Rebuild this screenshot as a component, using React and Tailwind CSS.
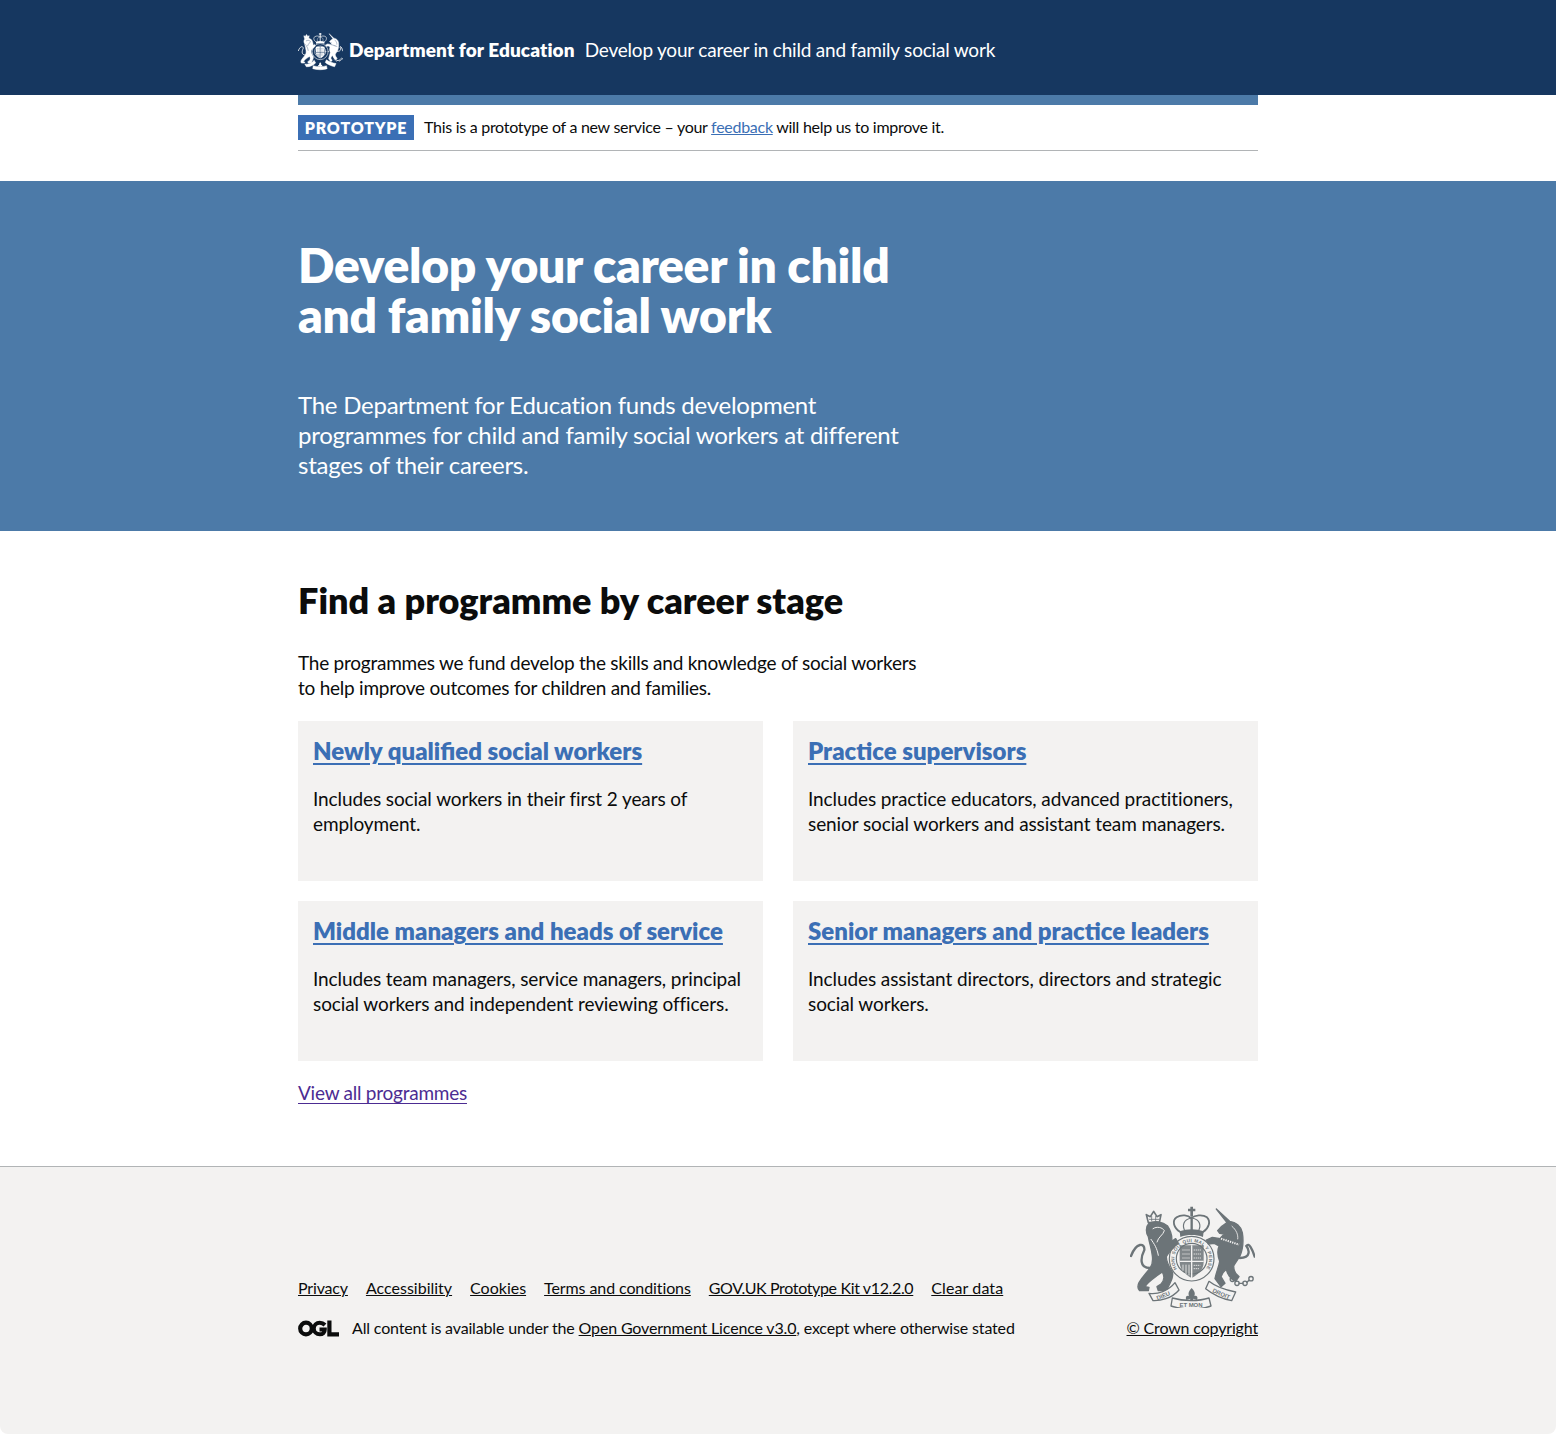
const font = { fontFamily: 'Lato, sans-serif' };

function Crest({ className, color, bg, labels = false }) {
  const ribbonFill = labels ? bg : color;
  return (
    <svg viewBox="15 20 375 306" className={className} aria-hidden="true">
      {/* lion crown */}
      <path d="M70 70 L64 46 L76 52 L86 36 L96 52 L108 46 L103 70 Z" fill={labels ? bg : color} stroke={color} strokeWidth="5" strokeLinejoin="round" />
      <path d="M72 60 H102 M80 50 V66 M92 50 V66" fill="none" stroke={color} strokeWidth="2.5" />
      <g fill={color} stroke={color} strokeWidth="4" strokeLinejoin="round">
        {/* lion */}
        <path d="M72 72 C62 82 62 100 70 112 C74 135 80 150 82 170 C84 185 82 195 76 205 C64 222 52 232 42 250 C38 258 38 268 44 274 L70 274 L72 264 L60 262 C68 248 84 238 100 226 L112 218 C118 230 120 240 108 254 L96 262 L100 274 L126 272 C134 250 148 235 142 218 C134 205 124 190 124 172 C130 160 142 150 150 140 L160 132 L152 118 L140 126 C142 110 136 92 128 80 C112 66 88 64 72 72 Z" />
        {/* unicorn */}
        <path d="M274 29 L314 66 C332 68 348 80 352 100 C356 125 354 150 344 172 C336 184 330 192 326 200 C326 212 330 224 342 232 L332 246 C316 240 306 222 304 210 C298 214 292 222 288 232 L300 252 L288 262 L270 238 C274 218 282 200 284 186 C278 170 276 156 282 140 L268 132 L250 134 L244 122 L262 114 L286 118 C288 112 294 108 298 104 L284 102 L278 94 C286 84 296 76 306 70 Z" />
      </g>
      <g fill={color}>
        {/* royal crown */}
        <path d="M196 22 h8 v6 h7 v8 h-7 v14 h-8 v-14 h-7 v-8 h7 z" />
        <path d="M164 96 C186 88 214 88 236 96 L234 113 C212 105 188 105 166 113 Z" />
        {/* motto flower */}
        <path d="M200 266 C208 274 212 282 208 290 C216 288 220 294 216 302 L204 298 L206 308 H194 L196 298 L184 302 C180 294 184 288 192 290 C188 282 192 274 200 266 Z" />
      </g>
      <g fill="none" stroke={color} strokeLinecap="round">
        <path d="M166 98 C146 86 140 64 155 54 C170 44 190 48 198 56 C210 48 232 44 246 54 C258 66 252 86 234 98" strokeWidth="5.5" />
        <path d="M200 54 V94" strokeWidth="7" />
        <path d="M180 96 C170 76 176 62 198 56 M220 96 C230 76 224 62 202 56" strokeWidth="3.5" />
        {/* tails */}
        <path d="M78 206 C40 208 48 172 58 152 C60 130 34 128 18 170" strokeWidth="7" />
        <path d="M344 176 C380 176 372 150 364 140 C372 128 382 150 389 172" strokeWidth="7" />
        {/* garter */}
        <circle cx="200" cy="178" r="67" strokeWidth={labels ? 3.5 : 5} />
        <circle cx="200" cy="178" r="46" strokeWidth={labels ? 3.5 : 5} />
        {/* chain */}
        <g strokeWidth="4">
          <circle cx="322" cy="240" r="6.5" />
          <circle cx="336" cy="252" r="6.5" />
          <circle cx="360" cy="252" r="6.5" />
          <circle cx="378" cy="238" r="6.5" />
          <path d="M342 252 H354 M366 249 L372 243" />
        </g>
      </g>
      {/* shield */}
      <path d="M164 138 H236 V188 C236 212 218 226 200 236 C182 226 164 212 164 188 Z" fill={color} fillOpacity={labels ? 0.85 : 1} />
      <g fill="none" stroke={bg}>
        <path d="M200 138 V236 M164 186 H236" strokeWidth="4" />
        <path d="M172 152 H194 M172 164 H194 M172 176 H194 M206 152 H228 M206 164 H228 M206 176 H228 M206 198 H226 M206 208 H222" strokeWidth="2.5" strokeDasharray="4 2" />
        <path d="M174 196 V214 M183 196 V224 M192 196 V228" strokeWidth="2.5" />
        {/* lion face and mane */}
        <path d="M84 88 C96 80 112 84 118 94 C114 108 100 112 96 128 M78 120 C88 134 96 146 100 168" strokeWidth="3" strokeLinecap="round" />
        {/* unicorn collar */}
        <path d="M288 118 L342 136" strokeWidth="6" strokeDasharray="4 3" />
        <path d="M320 80 C334 92 340 106 338 120" strokeWidth="2.5" />
      </g>
      {/* ribbons */}
      <g fill={ribbonFill} stroke={color} strokeWidth="4" strokeLinejoin="round">
        <path d="M72 282 C98 286 130 275 150 250 L162 272 C140 298 105 305 84 304 Z" />
        <path d="M252 246 C272 262 300 272 332 278 L320 304 C290 298 262 284 242 268 Z" />
        <path d="M142 296 C175 306 222 306 252 296 L258 320 C225 332 175 332 138 320 Z" />
      </g>
      {labels && (
        <g fill={color} fontWeight="700" style={{ fontFamily: '"Liberation Sans", sans-serif' }} textAnchor="middle">
          <text x="117" y="295" fontSize="18" transform="rotate(-22 117 295)">DIEU</text>
          <text x="286" y="289" fontSize="18" transform="rotate(24 286 289)">DROIT</text>
          <text x="198" y="324" fontSize="18">ET MON</text>
          <path id="garter-arc" d="M160 213 A52 52 0 1 1 240 213" fill="none" />
          <text fontSize="14" letterSpacing="1">
            <textPath href="#garter-arc" startOffset="50%">HONI SOIT QUI MAL Y PENSE</textPath>
          </text>
        </g>
      )}
    </svg>
  );
}

function OglLogo() {
  return (
    <svg viewBox="0 0 41 17" className="w-[41px] h-[17px]" aria-hidden="true">
      <circle cx="8" cy="8.5" r="5.8" fill="none" stroke="#0b0c0c" strokeWidth="4.2" />
      <path d="M27 5 C25.5 3.5 23.8 2.7 21.8 2.7 C18.4 2.7 15.8 5.2 15.8 8.5 C15.8 11.8 18.4 14.3 21.8 14.3 C24.8 14.3 26.8 12.4 26.8 9.4 H21.5" fill="none" stroke="#0b0c0c" strokeWidth="4" />
      <path d="M31.4 0.5 V14.4 H41" fill="none" stroke="#0b0c0c" strokeWidth="4.2" />
    </svg>
  );
}

function Card({ title, children }) {
  return (
    <div className="bg-[#f3f2f1] h-40 p-[15px]">
      <h3 className="text-[24px] leading-[30px] font-extrabold">
        <a href="#" className="text-[#3b6fb5] underline underline-offset-[3px] decoration-2">{title}</a>
      </h3>
      <p className="mt-[20px] text-[19px] leading-[25px] text-[#0b0c0c] tracking-[-0.1px]">{children}</p>
    </div>
  );
}

const footerLinks = [
  { label: "Privacy", cls: "tracking-[-0.16px]" },
  { label: "Accessibility", cls: "tracking-[0px]" },
  { label: "Cookies", cls: "tracking-[0px]" },
  { label: "Terms and conditions", cls: "tracking-[-0.1px]" },
  { label: "GOV.UK Prototype Kit v12.2.0", cls: "tracking-[-0.36px]" },
  { label: "Clear data", cls: "tracking-[0.1px]" },
];

export default function App() {
  return (
    <div className="min-h-[1434px] flex flex-col bg-white text-[#0b0c0c] overflow-hidden" style={font}>
      <header className="bg-[#163760] h-[95px] text-white">
        <div className="w-[960px] mx-auto flex items-center pt-[27px] h-[45px] box-content">
          <Crest className="w-[45px] h-[40px] shrink-0 mt-[2px]" color="#ffffff" bg="#163760" />
          <a href="#" className="ml-[6px] text-[19px] font-extrabold leading-[25px] tracking-[0.1px]">Department for Education</a>
          <span className="ml-[10px] text-[19px] leading-[25px] tracking-[-0.2px]">Develop your career in child and family social work</span>
        </div>
      </header>

      <div className="w-[960px] mx-auto">
        <div className="h-[10px] bg-[#4c7aa8]" />
        <div className="h-[46px] flex items-center border-b border-[#b1b4b6]">
          <strong className="bg-[#3b6fb5] text-white text-[16px] font-extrabold tracking-[0.8px] h-[25px] leading-[25px] w-[116px] text-center shrink-0">PROTOTYPE</strong>
          <span className="ml-[10px] text-[16px] tracking-[-0.28px] relative -top-px">
            This is a prototype of a new service – your <a href="#" className="text-[#3b6fb5] underline">feedback</a> will help us to improve it.
          </span>
        </div>
      </div>

      <section className="mt-[30px] bg-[#4c7aa8] h-[350px] text-white">
        <div className="w-[960px] mx-auto pt-[59px]">
          <h1 className="text-[48px] leading-[50px] font-extrabold w-[630px] tracking-[-0.3px]">Develop your career in child and family social work</h1>
          <p className="mt-[50px] text-[24px] leading-[30px] w-[630px] tracking-[-0.25px]">The Department for Education funds development programmes for child and family social workers at different stages of their careers.</p>
        </div>
      </section>

      <main className="w-[960px] mx-auto pt-[49px] pb-[61px]">
        <h2 className="text-[36px] leading-[40px] font-extrabold">Find a programme by career stage</h2>
        <p className="mt-[30px] text-[19px] leading-[25px] w-[630px] tracking-[-0.24px]">The programmes we fund develop the skills and knowledge of social workers to help improve outcomes for children and families.</p>
        <div className="mt-[21px] grid grid-cols-2 gap-x-[30px] gap-y-5">
          <Card title="Newly qualified social workers">Includes social workers in their first 2 years of employment.</Card>
          <Card title="Practice supervisors">Includes practice educators, advanced practitioners, senior social workers and assistant team managers.</Card>
          <Card title="Middle managers and heads of service">Includes team managers, service managers, principal social workers and independent reviewing officers.</Card>
          <Card title="Senior managers and practice leaders">Includes assistant directors, directors and strategic social workers.</Card>
        </div>
        <p className="mt-[19px] text-[19px] leading-[25px] tracking-[-0.24px]">
          <a href="#" className="text-[#4c2c92] underline underline-offset-[3px]">View all programmes</a>
        </p>
      </main>

      <footer className="flex-1 bg-[#f3f2f1] border-t border-[#b1b4b6] rounded-b-[8px]">
        <div className="w-[960px] mx-auto pt-[40px] flex justify-between items-end text-[16px] tracking-[-0.16px]">
          <div className="relative -top-px">
            <ul className="flex gap-[18px] leading-[20px] mb-[20px]">
              {footerLinks.map((l) => (
                <li key={l.label} className={l.cls}><a href="#" className="underline">{l.label}</a></li>
              ))}
            </ul>
            <div className="flex items-center leading-[20px]">
              <OglLogo />
              <span className="ml-[13px]">All content is available under the <a href="#" className="underline">Open Government Licence v3.0</a>, except where otherwise stated</span>
            </div>
          </div>
          <div className="flex flex-col items-end relative -top-px">
            <Crest className="w-[125px] h-[102px] mr-[3px] mb-[10px]" color="#6c7478" bg="#f3f2f1" labels />
            <a href="#" className="underline leading-[20px]">© Crown copyright</a>
          </div>
        </div>
      </footer>
    </div>
  );
}
